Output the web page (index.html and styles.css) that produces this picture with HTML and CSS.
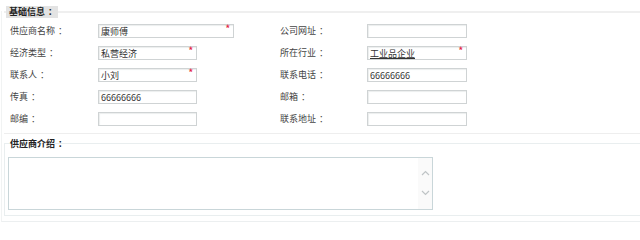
FILE: index.html
```html
<!DOCTYPE html>
<html lang="zh-CN">
<head>
<meta charset="utf-8">
<link rel="stylesheet" href="styles.css">
</head>
<body>
<div class="page">
  <div class="group basic">
    <div class="legend shaded">基础信息<span class="colon">：</span></div>
    <div class="rows">
      <div class="row">
        <div class="cell left"><span class="label">供应商名称<span class="colon">：</span></span><span class="input w135">康师傅<i class="req">*</i></span></div>
        <div class="cell"><span class="label">公司网址<span class="colon">：</span></span><span class="input w99"></span></div>
      </div>
      <div class="row">
        <div class="cell left"><span class="label">经济类型<span class="colon">：</span></span><span class="input w98">私营经济<i class="req">*</i></span></div>
        <div class="cell"><span class="label">所在行业<span class="colon">：</span></span><span class="input w99"><u class="ul">工业品企业</u><i class="req">*</i></span></div>
      </div>
      <div class="row">
        <div class="cell left"><span class="label">联系人<span class="colon">：</span></span><span class="input w98">小刘<i class="req">*</i></span></div>
        <div class="cell"><span class="label">联系电话<span class="colon">：</span></span><span class="input w99">66666666</span></div>
      </div>
      <div class="row">
        <div class="cell left"><span class="label">传真<span class="colon">：</span></span><span class="input w98">66666666</span></div>
        <div class="cell"><span class="label">邮箱<span class="colon">：</span></span><span class="input w99"></span></div>
      </div>
      <div class="row last">
        <div class="cell left"><span class="label">邮编<span class="colon">：</span></span><span class="input w98"></span></div>
        <div class="cell"><span class="label">联系地址<span class="colon">：</span></span><span class="input w99"></span></div>
      </div>
    </div>
  </div>
  <div class="group intro">
    <div class="legend">供应商介绍<span class="colon">：</span></div>
    <div class="textarea">
      <div class="scroll">
        <svg width="9" height="6" viewBox="0 0 9 6"><path d="M1 5 L4.5 1.5 L8 5" fill="none" stroke="#bfc4c6" stroke-width="1.2"/></svg>
        <svg width="9" height="6" viewBox="0 0 9 6"><path d="M1 1 L4.5 4.5 L8 1" fill="none" stroke="#bfc4c6" stroke-width="1.2"/></svg>
      </div>
    </div>
  </div>
</div>
</body>
</html>
```

FILE: styles.css
```css
html, body {
  margin: 0;
  padding: 0;
  background: #ffffff;
}
body {
  width: 640px;
  height: 240px;
  overflow: hidden;
  font-family: "Noto Sans CJK SC", "Liberation Sans", sans-serif;
  font-size: 9px;
  color: #3a3a3a;
}
.colon {
  padding-left: 3px;
}
.page {
  margin-left: 1px;
  padding: 0 0 5px 2px;
  border-left: 1px solid #f1f3f3;
  border-bottom: 1px solid #eceff0;
}
.group.basic {
  margin-top: 11px;
  border-top: 2px solid #efefef;
  border-bottom: 1px solid #eeeeee;
}
.legend {
  width: fit-content;
  font-weight: bold;
  line-height: 12px;
  height: 12px;
  color: #222;
}
.basic .legend {
  margin: -7px 0 0 2px;
  padding: 0 1px 0 3px;
}
.shaded {
  background: #e3e3e3;
}
.rows {
  margin-top: 6px;
}
.row {
  display: flex;
  height: 22px;
}
.row.last {
  height: 21px;
}
.cell {
  display: flex;
  align-items: flex-start;
}
.cell.left {
  width: 276px;
}
.label {
  width: 87px;
  height: 14px;
  line-height: 14px;
  box-sizing: border-box;
  color: #444;
}
.cell.left .label {
  width: 94px;
  padding-left: 6px;
}
.input {
  position: relative;
  height: 14px;
  line-height: 13px;
  box-sizing: border-box;
  border: 1px solid #cfd3d4;
  box-shadow: inset 1px 1px 1px #eceeee;
  padding-left: 2px;
  color: #333;
  background: #fff;
  white-space: nowrap;
}
.w135 { width: 136px; }
.w98 { width: 99px; }
.w99 { width: 100px; }
.ul {
  text-decoration: underline;
}
.req {
  position: absolute;
  right: 3px;
  top: 0;
  font-style: normal;
  font-weight: bold;
  font-size: 9px;
  line-height: 8px;
  color: #e3263f;
}
.group.intro {
  margin-top: 9px;
  border: 1px solid #e9eeef;
  border-right: none;
  padding-bottom: 5px;
}
.intro .legend {
  margin: -6px 0 0 5px;
}
.textarea {
  margin: 7px 0 0 3px;
  width: 425px;
  height: 53px;
  box-sizing: border-box;
  border: 1px solid #c9d6d9;
  display: flex;
  justify-content: flex-end;
}
.scroll {
  width: 14px;
  background: #fafafa;
  display: flex;
  flex-direction: column;
  align-items: center;
  gap: 14px;
  padding-top: 12px;
}
```
